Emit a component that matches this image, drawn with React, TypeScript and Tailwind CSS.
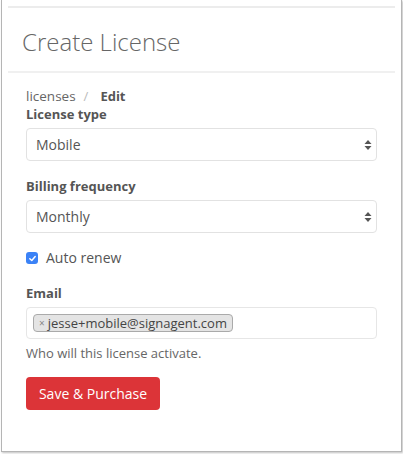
import React from 'react';

const font = { fontFamily: '"Open Sans", "Noto Sans", sans-serif' };

function SelectArrows() {
  return (
    <svg width="8" height="12" viewBox="0 0 8 12" className="absolute right-[4px] top-1/2 -translate-y-1/2">
      <path d="M4 1 L7.5 5 H0.5 Z" fill="#555" />
      <path d="M4 11 L7.5 7 H0.5 Z" fill="#555" />
    </svg>
  );
}

function SelectBox({ value }: { value: string }) {
  return (
    <div className="relative mt-[5px] h-[33px] w-[351px] rounded-[4px] border border-[#e2e2e2] bg-white flex items-center pl-[9px] text-[14px] text-[#555]">
      {value}
      <SelectArrows />
    </div>
  );
}

export default function App() {
  return (
    <div className="w-[403px] h-[454px] bg-white" style={font}>
      <div className="ml-[1px] w-[401px] h-[452px] border-l border-r border-b border-[#b5b5b5] shadow-[1px_1px_2px_rgba(0,0,0,0.25)] bg-white px-[6px] pt-[6px]">
        <div className="h-[2px] bg-[#ececec]" />
        <div className="h-[63px] pl-[14px] pt-[19px]">
          <h1 className="text-[24px] leading-[30px] font-light text-[#666]">Create License</h1>
        </div>
        <div className="h-[2px] bg-[#f0f0f0]" />
        <div className="pl-[18px] pt-[14px] text-[13px] leading-[18px] text-[#555]">
          <div className="flex items-center">
            <span className="text-[13.5px] text-[#666]">licenses</span>
            <span className="text-[#bbb] ml-[8px] mr-[12px]">/</span>
            <span className="font-bold text-[#555]">Edit</span>
          </div>
          <div className="font-bold">License type</div>
          <SelectBox value="Mobile" />
          <div className="mt-[16px] font-bold">Billing frequency</div>
          <SelectBox value="Monthly" />
          <div className="mt-[16px] flex items-center gap-[8px] text-[14px] text-[#555]">
            <span className="w-[12px] h-[12px] rounded-[3px] bg-[#3b82f6] flex items-center justify-center">
              <svg width="9" height="9" viewBox="0 0 10 10">
                <path d="M2 5.2 L4.2 7.3 L8 2.8" stroke="white" strokeWidth="1.6" fill="none" strokeLinecap="round" strokeLinejoin="round" />
              </svg>
            </span>
            Auto renew
          </div>
          <div className="mt-[17px] font-bold">Email</div>
          <div className="mt-[5px] h-[32px] w-[351px] rounded-[4px] border border-[#e6e6e6] flex items-center pl-[6px]">
            <span className="h-[18px] flex items-center rounded-[4px] border border-[#aaa] bg-[#e4e4e4] pl-[5px] pr-[5px] text-[13px] text-[#444]">
              <span className="text-[10px] text-[#888] mr-[3px]">×</span>
              jesse+mobile@signagent.com
            </span>
          </div>
          <div className="mt-[5px] text-[13px] text-[#666]">Who will this license activate.</div>
          <button className="mt-[15px] h-[33px] w-[134px] rounded-[4px] bg-[#dc3438] text-white text-[14px]">
            Save &amp; Purchase
          </button>
        </div>
      </div>
    </div>
  );
}
